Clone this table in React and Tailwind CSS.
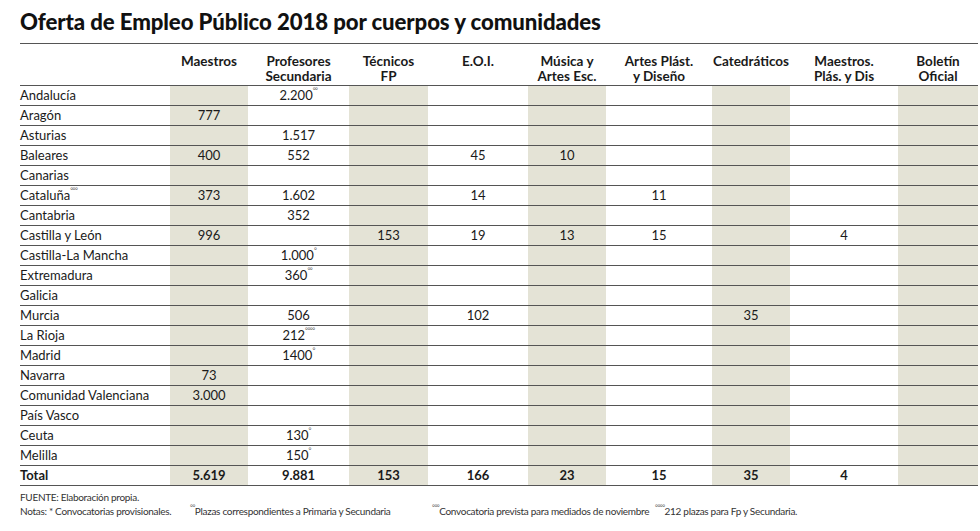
const cols = 'grid grid-cols-[150px_78px_101px_79px_100px_78px_106px_78px_108px_80px]';
const shaded = [1, 3, 5, 7, 9];

const headers = [
  '',
  ['Maestros'],
  ['Profesores', 'Secundaria'],
  ['Técnicos', 'FP'],
  ['E.O.I.'],
  ['Música y', 'Artes Esc.'],
  ['Artes Plást.', 'y Diseño'],
  ['Catedráticos'],
  ['Maestros.', 'Plás. y Dis'],
  ['Boletín', 'Oficial'],
];

// [label, labelMark, values...] ; value can be [text, mark]
const rows = [
  ['Andalucía', '', '', ['2.200', '°°']],
  ['Aragón', '', '777'],
  ['Asturias', '', '', '1.517'],
  ['Baleares', '', '400', '552', '', '45', '10'],
  ['Canarias', ''],
  ['Cataluña', '°°°', '373', '1.602', '', '14', '', '11'],
  ['Cantabria', '', '', '352'],
  ['Castilla y León', '', '996', '', '153', '19', '13', '15', '', '4'],
  ['Castilla-La Mancha', '', '', ['1.000', '°']],
  ['Extremadura', '', '', ['360', '°°']],
  ['Galicia', ''],
  ['Murcia', '', '', '506', '', '102', '', '', '35'],
  ['La Rioja', '', '', ['212', '°°°°']],
  ['Madrid', '', '', ['1400', '°']],
  ['Navarra', '', '73'],
  ['Comunidad Valenciana', '', '3.000'],
  ['País Vasco', ''],
  ['Ceuta', '', '', ['130', '°']],
  ['Melilla', '', '', ['150', '°']],
];

const totals = ['5.619', '9.881', '153', '166', '23', '15', '35', '4', ''];

function Mark({ children }) {
  if (!children) return null;
  return <span className="relative -top-[5px] text-[7px] tracking-[-0.5px] text-[#555]">{children}</span>;
}

function Cell({ value, idx }) {
  const text = Array.isArray(value) ? value[0] : value;
  const mark = Array.isArray(value) ? value[1] : '';
  return (
    <div className={`flex h-[20px] items-center justify-center border-b border-[#555] ${shaded.includes(idx) ? 'bg-[#e4e3d6]' : ''}`}>
      {text}
      <Mark>{mark}</Mark>
    </div>
  );
}

function Row({ label, mark, values, bold }) {
  return (
    <div className={`${cols} text-[13px] ${bold ? 'font-bold' : ''}`}>
      <div className="flex h-[20px] items-center border-b border-[#555]">
        {label}
        <Mark>{mark}</Mark>
      </div>
      {Array.from({ length: 9 }).map((_, i) => (
        <Cell key={i} idx={i + 1} value={values[i] || ''} />
      ))}
    </div>
  );
}

export default function App() {
  return (
    <div className="h-[531px] w-[980px] bg-white pl-[20px] pr-[2px] pt-[10px] text-[#1a1a1a] [font-family:Lato,'Open_Sans',sans-serif]">
      <h1 className="h-[34px] border-b border-[#555] text-[22.2px] font-black leading-[24px] tracking-[-0.1px] text-[#111]">
        Oferta de Empleo Público 2018 por cuerpos y comunidades
      </h1>

      <div className={`${cols} h-[42px] border-b border-[#555] pt-[10px] text-[13.5px] font-bold leading-[15px]`}>
        {headers.map((h, i) => (
          <div key={i} className="flex flex-col items-center text-center">
            {Array.isArray(h) && h.map((line) => <span key={line}>{line}</span>)}
          </div>
        ))}
      </div>

      {rows.map(([label, mark, ...values]) => (
        <Row key={label} label={label} mark={mark} values={values} />
      ))}
      <Row label="Total" mark="" values={totals} bold />

      <div className="whitespace-nowrap pt-[4px] text-[10px] leading-[14px] tracking-[-0.3px] text-[#333]">
        <div>FUENTE: Elaboración propia.</div>
        <div className="flex">
          <span className="w-[170px]">Notas: * Convocatorias provisionales.</span>
          <span className="w-[242px]">
            <Mark>°°</Mark>Plazas correspondientes a Primaria y Secundaria
          </span>
          <span className="w-[223px]">
            <Mark>°°°</Mark>Convocatoria prevista para mediados de noviembre
          </span>
          <span>
            <Mark>°°°°</Mark>212 plazas para Fp y Secundaria.
          </span>
        </div>
      </div>
    </div>
  );
}
